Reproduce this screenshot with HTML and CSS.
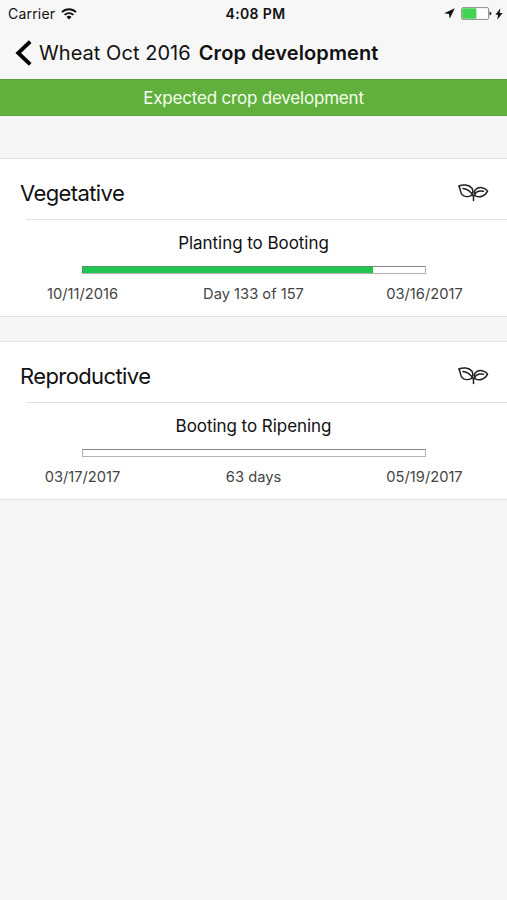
FILE: index.html
```
<!DOCTYPE html>
<html lang="en">
<head>
    <meta charset="UTF-8">
    <meta name="viewport" content="width=device-width, initial-scale=1.0">
    <title>Crop development</title>
    <link rel="stylesheet" href="styles.css">
</head>
<body>
    <header class="header">
        <div class="status-bar">
            <div class="status-left">
                <span class="carrier">Carrier</span>
                <svg class="wifi" width="16" height="12" viewBox="0 0 16 12" fill="none" stroke="#111" stroke-width="1.8">
                    <path d="M1 4.1a10 10 0 0 1 14 0"/>
                    <path d="M3.6 6.900a6.300 6.300 0 0 1 8.800 0"/>
                    <path d="M8 11.400L5.500 9a3.700 3.700 0 0 1 5 0z" fill="#111" stroke="none"/>
                </svg>
            </div>
            <span class="clock">4:08 PM</span>
            <div class="status-right">
                <svg width="11" height="11" viewBox="0 0 11 11" fill="#111"><path d="M10.800 0.300L0.200 5.200l4.800 0.800 0.700 4.800z"/></svg>
                <svg class="battery" width="31" height="13" viewBox="0 0 31 13">
                    <rect x="0.6" y="0.6" width="27" height="11.8" rx="1.5" fill="#fff" stroke="#8d8d8d"/>
                    <rect x="1.2" y="1.2" width="14.2" height="10.6" rx="1" fill="#45d354"/>
                    <path d="M28.500 4.400q2 0.400 2 2.100t-2 2.100z" fill="#333"/>
                </svg>
                <svg width="8" height="12" viewBox="0 0 8 12" fill="#111"><path d="M5.400 0.300L0.400 6.800h2.700L2.200 11.800 7.600 5H4.600z"/></svg>
            </div>
        </div>
        <nav class="nav">
            <svg class="back" width="18" height="26" viewBox="0 0 18 26" fill="none" stroke="#000" stroke-width="3.8"><path d="M15.200 1.600L3.200 13l12 11.400"/></svg>
            <span class="nav-parent">Wheat Oct 2016</span>
            <h1 class="nav-title">Crop development</h1>
        </nav>
    </header>

    <div class="banner">Expected crop development</div>

    <section class="card">
        <div class="card-header">
            <h2 class="card-title">Vegetative</h2>
            <svg class="leaf" width="32" height="20" viewBox="0 0 32 20" fill="none" stroke="#222" stroke-width="1.5" stroke-linecap="round" stroke-linejoin="round">
                <path d="M1.800 3C5.500 1.200 12 1.400 14.800 5c1.700 2.500 1.200 5-.6 7.600-3 1.500-7 1.400-9.200-1C3 9.300 3.600 5.400 1.800 3z"/>
                <path d="M6 5.600c4.200.5 8.200 3.400 10.500 7.800v4"/>
                <path d="M30.600 8.200c-2.600-3.800-8.600-5-12-1.700-1.700 2-1.500 4.400-.2 6.300 4 2 9.600.7 12.200-4.600z"/>
                <path d="M26.500 8.200c-4.500-.7-8.500.8-10 5.200"/>
            </svg>
        </div>
        <div class="card-body">
            <h3 class="stage">Planting to Booting</h3>
            <div class="progress"><div class="progress-fill" style="width: 85.2%"></div></div>
            <div class="dates">
                <span>10/11/2016</span>
                <span>Day 133 of 157</span>
                <span>03/16/2017</span>
            </div>
        </div>
    </section>

    <section class="card">
        <div class="card-header">
            <h2 class="card-title">Reproductive</h2>
            <svg class="leaf" width="32" height="20" viewBox="0 0 32 20" fill="none" stroke="#222" stroke-width="1.5" stroke-linecap="round" stroke-linejoin="round">
                <path d="M1.800 3C5.500 1.200 12 1.400 14.800 5c1.700 2.500 1.200 5-.6 7.600-3 1.500-7 1.400-9.200-1C3 9.300 3.600 5.400 1.800 3z"/>
                <path d="M6 5.600c4.200.5 8.200 3.400 10.500 7.800v4"/>
                <path d="M30.600 8.200c-2.600-3.800-8.600-5-12-1.700-1.700 2-1.500 4.400-.2 6.300 4 2 9.600.7 12.200-4.600z"/>
                <path d="M26.500 8.200c-4.500-.7-8.500.8-10 5.200"/>
            </svg>
        </div>
        <div class="card-body">
            <h3 class="stage">Booting to Ripening</h3>
            <div class="progress"></div>
            <div class="dates">
                <span>03/17/2017</span>
                <span>63 days</span>
                <span>05/19/2017</span>
            </div>
        </div>
    </section>
</body>
</html>
```

FILE: styles.css
```
* {
    box-sizing: border-box;
}
body {
    margin: 0;
    min-height: 900px;
    background-color: #f6f6f6;
    color: #111;
    font-family: Inter, "Liberation Sans", sans-serif;
}
h1, h2, h3 {
    margin: 0;
    font-weight: 400;
}
svg {
    display: block;
    flex: none;
}
.header {
    height: 79px;
    background-color: #f7f7f7;
}
.status-bar {
    display: grid;
    grid-template-columns: 1fr auto 1fr;
    align-items: center;
    height: 27px;
    padding: 0 4px 0 8px;
    font-size: 14px;
    line-height: 27px;
}
.status-left,
.status-right {
    display: flex;
    align-items: center;
}
.status-left {
    gap: 6px;
}
.carrier {
    letter-spacing: 0.2px;
}
.status-right {
    justify-content: flex-end;
    gap: 5px;
}
.battery {
    margin-left: 1px;
    margin-right: -2px;
}
.clock {
    font-weight: 600;
    letter-spacing: 0.35px;
}
.nav {
    display: flex;
    align-items: center;
    height: 51px;
    padding-left: 15px;
    font-size: 20px;
    white-space: nowrap;
}
.nav-parent {
    margin-left: 6px;
    letter-spacing: 0.05px;
}
.nav-title {
    margin-left: 8px;
    font-size: 20px;
    font-weight: 600;
    letter-spacing: 0.1px;
}
.banner {
    height: 37px;
    border-top: 1px solid #58a437;
    border-bottom: 1px solid #58a437;
    background-color: #61af3d;
    color: #f4ffee;
    font-size: 17px;
    letter-spacing: -0.2px;
    line-height: 36px;
    text-align: center;
}
.card {
    height: 159px;
    margin-top: 24px;
    border-top: 1px solid #e3e3e3;
    border-bottom: 1px solid #e3e3e3;
    background-color: #fff;
}
.banner + .card {
    margin-top: 42px;
}
.card-header {
    display: flex;
    justify-content: space-between;
    height: 60px;
    padding: 0 18px 0 20px;
}
.card-title {
    font-size: 22px;
    letter-spacing: -0.6px;
    line-height: 69px;
}
.leaf {
    margin-top: 24px;
}
.card-body {
    margin-left: 26px;
    border-top: 1px solid #e3e3e3;
}
.stage {
    margin-right: 26px;
    padding-top: 14px;
    font-size: 17px;
    letter-spacing: -0.05px;
    line-height: 19px;
    text-align: center;
}
.progress {
    width: 344px;
    height: 8px;
    margin: 13px 0 0 56px;
    border: 1px solid #b5b0b2;
    border-top-color: #858585;
    background-color: #fff;
}
.progress-fill {
    height: 7px;
    margin: -1px 0 0 -1px;
    border-top: 1px solid #4c9360;
    border-left: 1px solid #4c9360;
    background-color: #20c64f;
}
.dates {
    display: grid;
    grid-template-columns: repeat(3, 171px);
    margin: 10px 0 0 -29px;
    color: #444;
    font-size: 14.7px;
    line-height: 20px;
    text-align: center;
}
```
